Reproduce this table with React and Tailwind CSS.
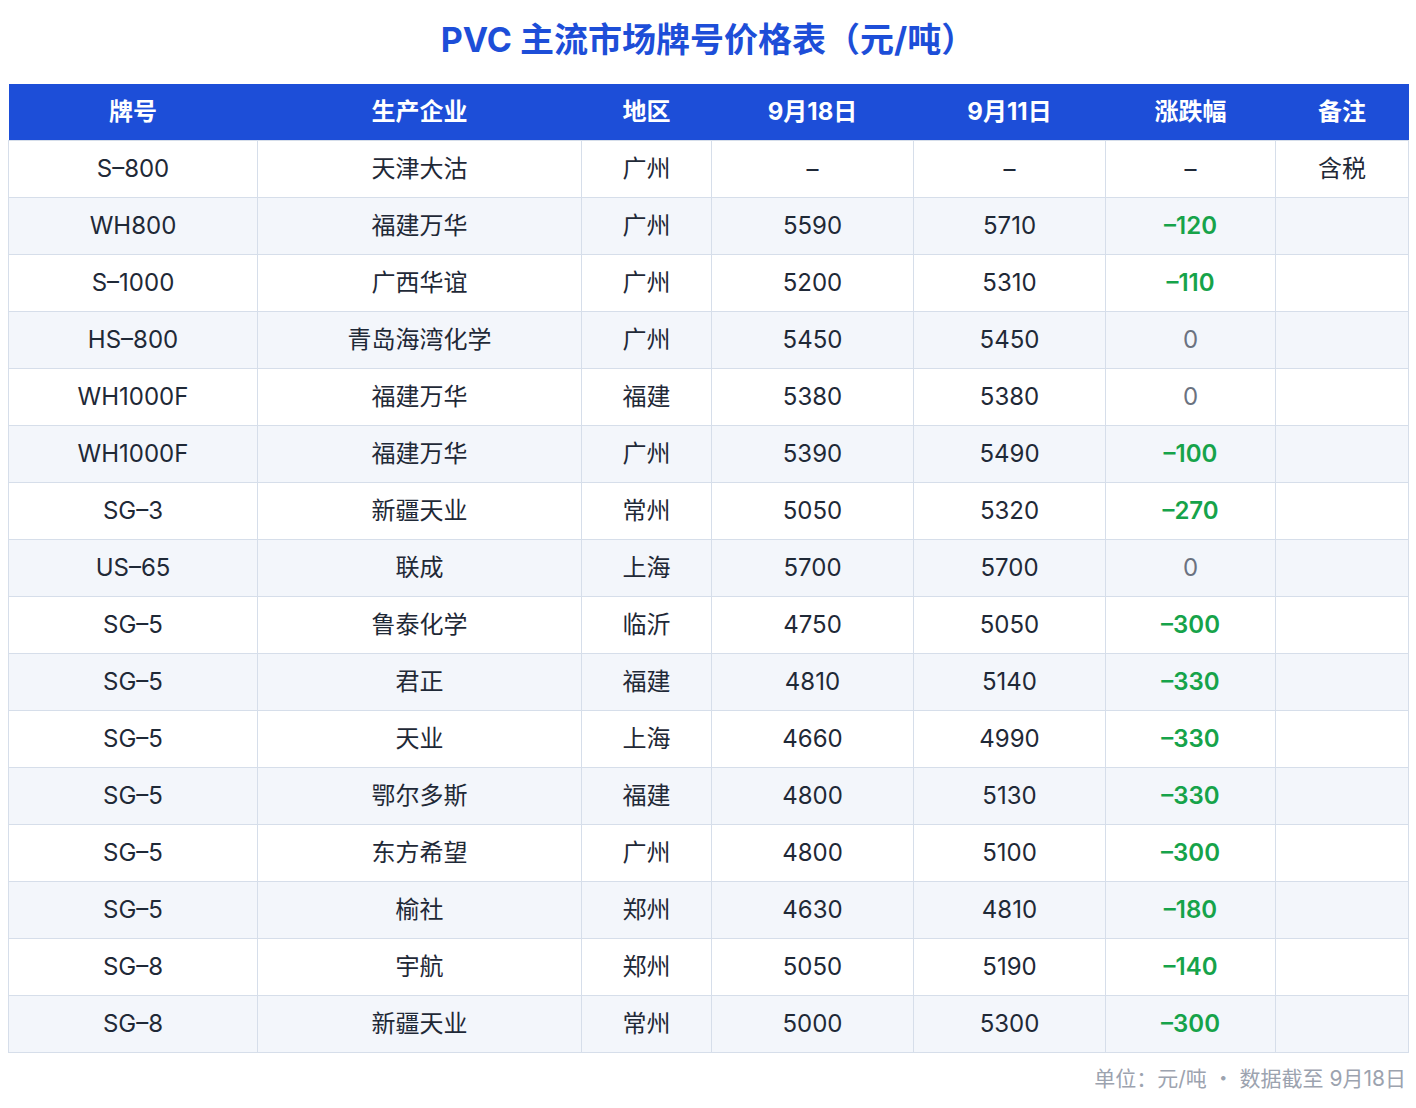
const rows = [
  ['S–800', '天津大沽', '广州', '–', '–', '–', '含税'],
  ['WH800', '福建万华', '广州', '5590', '5710', '–120', ''],
  ['S–1000', '广西华谊', '广州', '5200', '5310', '–110', ''],
  ['HS–800', '青岛海湾化学', '广州', '5450', '5450', '0', ''],
  ['WH1000F', '福建万华', '福建', '5380', '5380', '0', ''],
  ['WH1000F', '福建万华', '广州', '5390', '5490', '–100', ''],
  ['SG–3', '新疆天业', '常州', '5050', '5320', '–270', ''],
  ['US–65', '联成', '上海', '5700', '5700', '0', ''],
  ['SG–5', '鲁泰化学', '临沂', '4750', '5050', '–300', ''],
  ['SG–5', '君正', '福建', '4810', '5140', '–330', ''],
  ['SG–5', '天业', '上海', '4660', '4990', '–330', ''],
  ['SG–5', '鄂尔多斯', '福建', '4800', '5130', '–330', ''],
  ['SG–5', '东方希望', '广州', '4800', '5100', '–300', ''],
  ['SG–5', '榆社', '郑州', '4630', '4810', '–180', ''],
  ['SG–8', '宇航', '郑州', '5050', '5190', '–140', ''],
  ['SG–8', '新疆天业', '常州', '5000', '5300', '–300', ''],
];

const headers = ['牌号', '生产企业', '地区', '9月18日', '9月11日', '涨跌幅', '备注'];
const widths = ['w-[249px]', 'w-[324px]', 'w-[130px]', 'w-[202px]', 'w-[192px]', 'w-[170px]', 'w-[133px]'];

function changeClass(v) {
  if (v.startsWith('–') && v.length > 1) return 'text-[#16a34a] font-semibold';
  if (v === '0') return 'text-[#6b7280]';
  return 'text-[#1f2937]';
}

export default function App() {
  return (
    <div
      className="w-[1416px] bg-white px-2 pt-5"
      style={{ fontFamily: 'Inter, "Noto Sans CJK SC", sans-serif' }}
    >
      <h1 className="mb-6 text-center text-[34px] font-bold leading-[40px] text-[#1d4ed8]">
        PVC 主流市场牌号价格表（元/吨）
      </h1>
      <table className="w-[1400px] table-fixed border-collapse text-center text-[24px]">
        <colgroup>
          {widths.map((w, i) => (
            <col key={i} className={w} />
          ))}
        </colgroup>
        <thead>
          <tr className="bg-[#1d4ed8]">
            {headers.map((h) => (
              <th key={h} className="h-[56px] p-0 font-bold text-white">
                {h}
              </th>
            ))}
          </tr>
        </thead>
        <tbody>
          {rows.map((r, i) => (
            <tr key={i} className={i % 2 === 0 ? 'bg-white' : 'bg-[#f3f6fb]'}>
              {r.map((c, j) => (
                <td
                  key={j}
                  className={`h-[57px] border border-[#d6deea] p-0 leading-[28px] ${
                    j === 5 ? changeClass(c) : 'text-[#1f2937]'
                  }`}
                >
                  {c}
                </td>
              ))}
            </tr>
          ))}
        </tbody>
      </table>
      <div className="mt-3 pr-[2px] text-right text-[21px] leading-[24px] text-[#9ca3af]">
        单位：元/吨 <span style={{ fontFamily: '"Noto Sans CJK SC", sans-serif' }}>·</span> 数据截至 9月18日
      </div>
    </div>
  );
}
